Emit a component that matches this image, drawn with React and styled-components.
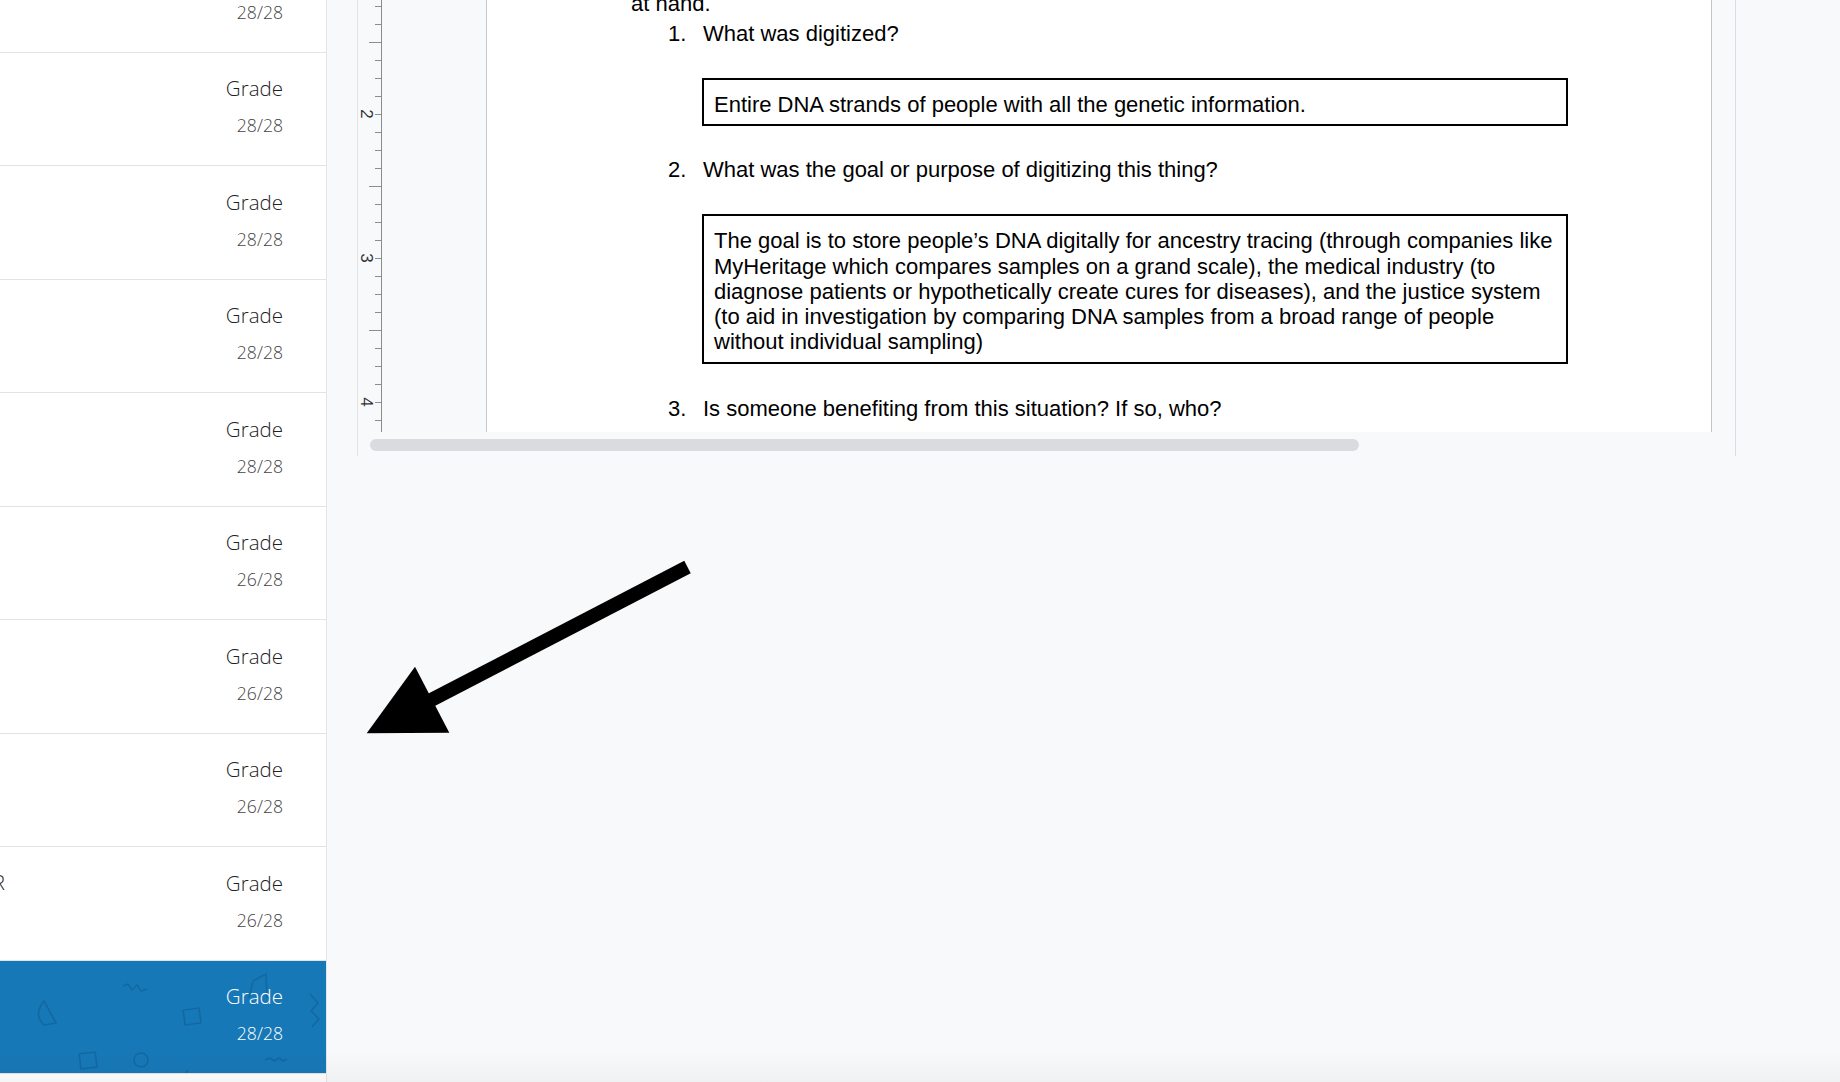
import React from "react";
import styled, { createGlobalStyle } from "styled-components";

const GlobalStyle = createGlobalStyle`
  html, body {
    margin: 0;
    padding: 0;
  }
  body {
    background: #f8f9fb;
    font-family: "Open Sans", "Liberation Sans", sans-serif;
    overflow: hidden;
  }
`;

const Shell = styled.div`
  position: relative;
  display: grid;
  grid-template-columns: 327px 1fr;
  height: 1082px;
  overflow: hidden;
`;

const Sidebar = styled.aside`
  background: #fff;
  border-right: 1px solid #e4e5e7;
  overflow: hidden;
`;

const RowList = styled.div`
  margin-top: -61px;
`;

const Row = styled.div`
  position: relative;
  height: 113.5px;
  box-sizing: border-box;
  border-bottom: 1px solid #e2e3e5;
  display: flex;
  justify-content: space-between;
  padding: 21.7px 43px 0 0;
  background: ${p => (p.$active ? "#1778b7" : "#fff")};
  overflow: hidden;
`;

const Name = styled.span`
  margin-left: -7px;
  font-size: 20px;
  font-weight: 300;
  line-height: 28px;
  color: #222;
  white-space: nowrap;
`;

const GradeCell = styled.div`
  position: relative;
  z-index: 1;
  margin-left: auto;
  display: flex;
  flex-direction: column;
  align-items: flex-end;
`;

const GradeLabel = styled.span`
  font-size: 20.5px;
  font-weight: 300;
  line-height: 28px;
  color: ${p => (p.$active ? "#fff" : "#222")};
`;

const Score = styled.span`
  margin-top: 11.2px;
  font-size: 17.6px;
  font-weight: 300;
  line-height: 24px;
  color: ${p => (p.$active ? "#fff" : "#444")};
`;

const Doodles = styled.svg`
  position: absolute;
  left: 0;
  top: 0;
  pointer-events: none;
`;

const Main = styled.main`
  position: relative;
  padding-left: 30px;
  background: #f8f9fb;
`;

const Viewer = styled.section`
  width: 1379px;
  box-sizing: border-box;
  border-left: 1px solid #e2e3e5;
  border-right: 1px solid #dcdde0;
  display: flex;
  flex-direction: column;
`;

const ScrollArea = styled.div`
  height: 432px;
  display: flex;
  overflow: hidden;
`;

const RulerSvg = styled.svg`
  flex: none;
  display: block;
`;

const Page = styled.div`
  flex: none;
  margin-left: 104px;
  width: 1226px;
  box-sizing: border-box;
  background: #fff;
  border-left: 1px solid #c9c9c9;
  border-right: 1px solid #c4c4c4;
  padding-left: 144px;
  font-family: "Liberation Sans", Arial, sans-serif;
  font-size: 22px;
  line-height: 25.3px;
  color: #000;
`;

const Doc = styled.div`
  margin-top: -9px;
`;

const Para = styled.p`
  margin: 0;
  white-space: nowrap;
`;

const Question = styled.div`
  display: flex;
  margin: ${p => p.$mt}px 0 0 37px;
  white-space: nowrap;
`;

const QNum = styled.span`
  flex: none;
  width: 35px;
`;

const AnswerBox = styled.div`
  margin: ${p => p.$mt}px 0 0 71px;
  width: 866px;
  box-sizing: border-box;
  border: 2px solid #000;
  padding: 12px 10px 7px;
  white-space: nowrap;
`;

const Track = styled.div`
  height: 24px;
  box-sizing: border-box;
  padding: 7px 0 0 12px;
`;

const Thumb = styled.div`
  width: 989px;
  height: 11.5px;
  border-radius: 6px;
  background: #dadbde;
`;

const Arrow = styled.svg`
  position: absolute;
  left: 360px;
  top: 555px;
  pointer-events: none;
`;

const BottomFade = styled.div`
  position: absolute;
  left: 0;
  right: 0;
  bottom: 0;
  height: 30px;
  background: linear-gradient(rgba(0, 0, 0, 0), rgba(0, 0, 0, 0.035));
  pointer-events: none;
`;

const rows = [
  { score: "28/28" },
  { score: "28/28" },
  { score: "28/28" },
  { score: "28/28" },
  { score: "28/28" },
  { score: "26/28" },
  { score: "26/28" },
  { score: "26/28" },
  { score: "26/28", name: "R" },
  { score: "28/28", active: true },
  { score: "28/28" },
];

function RowDoodles() {
  return (
    <Doodles width="326" height="113" viewBox="0 0 326 113" fill="none"
             stroke="rgba(10, 50, 90, 0.22)" strokeWidth="1.6" strokeLinejoin="round">
      <path d="M44 40 Q33 54 44 64 L56 62 Z" />
      <polyline points="123,25 128,23 132,29 137,24 141,30 147,28" />
      <rect x="184" y="48" width="16" height="15" transform="rotate(-8 192 55)" />
      <rect x="80" y="92" width="16" height="15" transform="rotate(-6 88 99)" />
      <circle cx="141" cy="99" r="7" />
      <polyline points="265,99 270,97 274,100 279,97 283,100 287,98" />
      <path d="M249 37 L253 20 L266 13 L267 37" />
      <polyline points="310,33 318,42 311,50 319,58 312,66" />
      <path d="M186 112 L188 109" />
    </Doodles>
  );
}

function Ruler() {
  const ticks = [];
  for (let y = 6; y <= 432; y += 18) {
    const half = (y - 42) % 144 === 0;
    ticks.push(<line key={y} x1={half ? 11 : 17} y1={y + 0.5} x2="23" y2={y + 0.5} />);
  }
  const labels = [
    { n: "2", y: 114 },
    { n: "3", y: 258 },
    { n: "4", y: 402 },
  ];
  return (
    <RulerSvg width="24" height="432" viewBox="0 0 24 432">
      <g stroke="#8d8d8d" strokeWidth="1">
        <line x1="23.5" y1="0" x2="23.5" y2="432" />
        {ticks}
      </g>
      {labels.map(l => (
        <text key={l.n} transform={`translate(8 ${l.y}) rotate(90)`} textAnchor="middle"
              dominantBaseline="central" fontFamily="Liberation Sans, Arial, sans-serif"
              fontSize="17" fill="#333">
          {l.n}
        </text>
      ))}
    </RulerSvg>
  );
}

export default function App() {
  return (
    <>
      <GlobalStyle />
      <Shell>
        <Sidebar>
          <RowList>
            {rows.map((r, i) => (
              <Row key={i} $active={r.active}>
                {r.active && <RowDoodles />}
                {r.name && <Name>{r.name}</Name>}
                <GradeCell>
                  <GradeLabel $active={r.active}>Grade</GradeLabel>
                  <Score $active={r.active}>{r.score}</Score>
                </GradeCell>
              </Row>
            ))}
          </RowList>
        </Sidebar>

        <Main>
          <Viewer>
            <ScrollArea>
              <Ruler />
              <Page>
                <Doc>
                  <Para>at hand.</Para>
                  <Question $mt={4.4}>
                    <QNum>1.</QNum>
                    <span>What was digitized?</span>
                  </Question>
                  <AnswerBox $mt={31.6}>
                    Entire DNA strands of people with all the genetic information.
                  </AnswerBox>
                  <Question $mt={30.8}>
                    <QNum>2.</QNum>
                    <span>What was the goal or purpose of digitizing this thing?</span>
                  </Question>
                  <AnswerBox $mt={32.3}>
                    The goal is to store people’s DNA digitally for ancestry tracing (through companies like<br />
                    MyHeritage which compares samples on a grand scale), the medical industry (to<br />
                    diagnose patients or hypothetically create cures for diseases), and the justice system<br />
                    (to aid in investigation by comparing DNA samples from a broad range of people<br />
                    without individual sampling)
                  </AnswerBox>
                  <Question $mt={32}>
                    <QNum>3.</QNum>
                    <span>Is someone benefiting from this situation? If so, who?</span>
                  </Question>
                </Doc>
              </Page>
            </ScrollArea>
            <Track>
              <Thumb />
            </Track>
          </Viewer>
        </Main>

        <Arrow width="340" height="185" viewBox="0 0 340 185">
          <line x1="327.5" y1="12" x2="48" y2="157" stroke="#000" strokeWidth="14" />
          <polygon points="55,111.7 6.7,178.3 89.3,177.7" fill="#000" />
        </Arrow>
        <BottomFade />
      </Shell>
    </>
  );
}
